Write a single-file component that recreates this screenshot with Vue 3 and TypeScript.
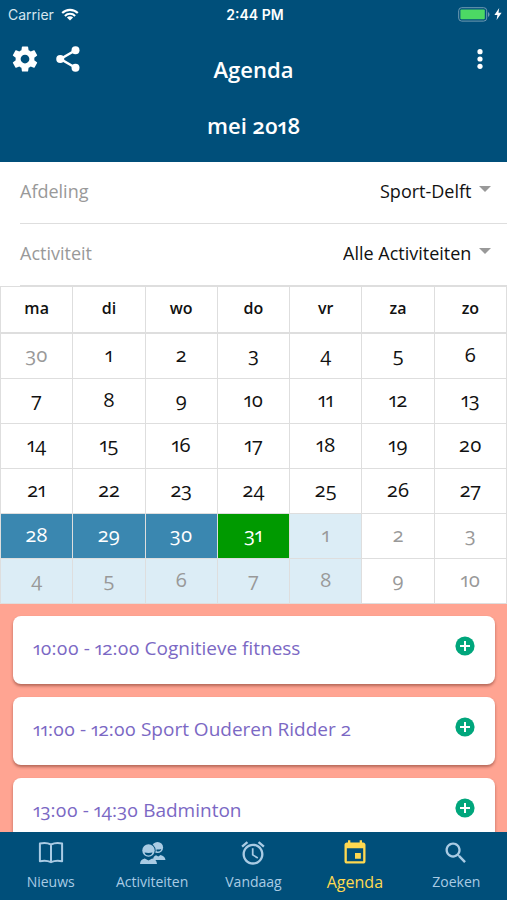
<script setup lang="ts">
import { ref } from 'vue'

type DayState = 'plain' | 'muted' | 'week' | 'today' | 'soon'

interface Day {
  label: number
  state: DayState
}

interface Activity {
  time: string
  name: string
}

interface Tab {
  id: string
  label: string
}

const weekdays: string[] = ['ma', 'di', 'wo', 'do', 'vr', 'za', 'zo']

function buildWeeks(): Day[][] {
  const days: Day[] = [{ label: 30, state: 'muted' }]
  for (let d = 1; d <= 31; d++) {
    const state: DayState = d === 31 ? 'today' : d >= 28 ? 'week' : 'plain'
    days.push({ label: d, state })
  }
  for (let d = 1; d <= 10; d++) {
    const soon = d === 1 || (d >= 4 && d <= 8)
    days.push({ label: d, state: soon ? 'soon' : 'muted' })
  }
  const weeks: Day[][] = []
  for (let i = 0; i < days.length; i += 7) weeks.push(days.slice(i, i + 7))
  return weeks
}

const weeks = buildWeeks()

const department = ref('Sport-Delft')
const activity = ref('Alle Activiteiten')

const activities: Activity[] = [
  { time: '10:00 - 12:00', name: 'Cognitieve fitness' },
  { time: '11:00 - 12:00', name: 'Sport Ouderen Ridder 2' },
  { time: '13:00 - 14:30', name: 'Badminton' },
]

const tabs: Tab[] = [
  { id: 'news', label: 'Nieuws' },
  { id: 'people', label: 'Activiteiten' },
  { id: 'today', label: 'Vandaag' },
  { id: 'agenda', label: 'Agenda' },
  { id: 'search', label: 'Zoeken' },
]
const activeTab = ref('agenda')
</script>

<template>
  <div class="app">
    <header class="header">
      <div class="status">
        <div class="status-left">
          <span>Carrier</span>
          <svg class="wifi" viewBox="0 0 18 13" aria-hidden="true">
            <path d="M1.200 5.100a11 11 0 0 1 15.600 0M3.900 7.900a7.200 7.200 0 0 1 10.200 0" fill="none" stroke="currentColor" stroke-width="2.100" />
            <path d="M9 12.600 5.900 9.500a4.400 4.400 0 0 1 6.200 0z" fill="currentColor" />
          </svg>
        </div>
        <span class="clock">2:44 PM</span>
        <div class="status-right">
          <svg class="battery" viewBox="0 0 32 15" aria-hidden="true">
            <rect x="0.700" y="0.700" width="28" height="13.400" rx="3" fill="none" stroke="#6f9ab3" stroke-width="1" />
            <rect x="2.400" y="2.600" width="24.400" height="9.600" rx="1" fill="#4cd964" />
            <path d="M30 5v5q1.500-.6 1.500-2.500T30 5z" fill="#6f9ab3" />
          </svg>
          <svg class="bolt" viewBox="0 0 8 12" aria-hidden="true">
            <path d="M5.200 0 .4 6.900h3L2.600 12l5-7.200H4.500z" fill="currentColor" />
          </svg>
        </div>
      </div>
      <div class="toolbar">
        <div class="tools">
          <button type="button" class="tool" aria-label="Instellingen">
            <svg class="gear" viewBox="0 0 24 24" aria-hidden="true">
              <path fill="currentColor" d="M19.430 12.980c.040-.32.070-.64.070-.98s-.030-.66-.070-.98l2.110-1.650c.190-.150.240-.420.120-.640l-2-3.460c-.120-.220-.390-.300-.610-.220l-2.490 1c-.520-.400-1.080-.730-1.690-.980l-.380-2.650C14.460 2.180 14.250 2 14 2h-4c-.250 0-.460.180-.490.420l-.380 2.650c-.610.250-1.170.590-1.690.980l-2.490-1c-.230-.090-.490 0-.610.220l-2 3.460c-.130.220-.070.490.120.640l2.110 1.650c-.040.320-.070.650-.070.980s.030.660.070.980l-2.110 1.650c-.190.150-.240.420-.120.640l2 3.460c.120.220.390.300.610.220l2.490-1c.520.400 1.080.730 1.690.980l.380 2.650c.030.240.240.420.490.420h4c.250 0 .460-.180.490-.420l.380-2.650c.610-.250 1.170-.590 1.690-.980l2.490 1c.230.090.490 0 .610-.220l2-3.460c.120-.220.070-.490-.120-.640l-2.110-1.650zM12 15.500c-1.930 0-3.500-1.570-3.500-3.500s1.570-3.500 3.500-3.500 3.500 1.570 3.500 3.500-1.570 3.500-3.500 3.500z" />
            </svg>
          </button>
          <button type="button" class="tool" aria-label="Delen">
            <svg class="share" viewBox="0 0 24 24" aria-hidden="true">
              <path d="M18 5 6 12l12 7" fill="none" stroke="currentColor" stroke-width="2" />
              <g fill="currentColor">
                <circle cx="18" cy="5" r="3.200" />
                <circle cx="5.800" cy="12" r="3.200" />
                <circle cx="18" cy="19" r="3.200" />
              </g>
            </svg>
          </button>
        </div>
        <h1 class="title">Agenda</h1>
        <div class="tools tools-end">
          <button type="button" class="tool" aria-label="Meer">
            <svg class="more" viewBox="0 0 6 20" aria-hidden="true" fill="currentColor">
              <circle cx="3" cy="2.700" r="2.600" />
              <circle cx="3" cy="10" r="2.600" />
              <circle cx="3" cy="17.300" r="2.600" />
            </svg>
          </button>
        </div>
      </div>
      <h2 class="month">mei 2018</h2>
    </header>

    <form class="filters">
      <div class="filter">
        <label for="department">Afdeling</label>
        <select id="department" v-model="department">
          <option>Sport-Delft</option>
        </select>
        <svg class="caret" viewBox="0 0 12 6" aria-hidden="true"><path d="M0 0h12L6 6z" fill="#999" /></svg>
      </div>
      <div class="filter">
        <label for="activity">Activiteit</label>
        <select id="activity" v-model="activity">
          <option>Alle Activiteiten</option>
        </select>
        <svg class="caret" viewBox="0 0 12 6" aria-hidden="true"><path d="M0 0h12L6 6z" fill="#999" /></svg>
      </div>
    </form>

    <table class="calendar">
      <thead>
        <tr>
          <th v-for="name in weekdays" :key="name" scope="col">{{ name }}</th>
        </tr>
      </thead>
      <tbody>
        <tr v-for="(week, w) in weeks" :key="w">
          <td v-for="day in week" :key="day.label" :class="day.state">
            <button type="button" class="day">{{ day.label }}</button>
          </td>
        </tr>
      </tbody>
    </table>

    <main class="agenda">
      <article v-for="item in activities" :key="item.time" class="card">
        <span class="card-text">{{ item.time }} {{ item.name }}</span>
        <button type="button" class="add" :aria-label="`${item.name} toevoegen`">
          <svg viewBox="0 0 20 20" aria-hidden="true">
            <circle cx="10" cy="10" r="9.600" fill="#00a67c" />
            <path d="M10 5v10M5 10h10" stroke="#fff" stroke-width="2" />
          </svg>
        </button>
      </article>
    </main>

    <nav class="tabs">
      <a
        v-for="tab in tabs"
        :key="tab.id"
        href="#"
        class="tab"
        :class="{ active: tab.id === activeTab }"
        @click.prevent="activeTab = tab.id"
      >
        <svg v-if="tab.id === 'news'" viewBox="0 0 28 28" aria-hidden="true">
          <path d="M14 5.500C10.500 3.700 6.500 3.600 2.900 4.500v17.700c3.700-.9 7.600-.8 11.100 1 3.500-1.800 7.400-1.900 11.100-1V4.500C21.500 3.600 17.500 3.700 14 5.500zM14 5.500v17.500" fill="none" stroke="currentColor" stroke-width="2" stroke-linejoin="round" />
        </svg>
        <svg v-else-if="tab.id === 'people'" viewBox="0 0 28 28" aria-hidden="true">
          <g fill="currentColor">
            <circle cx="19.500" cy="8.500" r="5.600" />
            <path d="M15 21c.2-2.500.8-4 3-4.700l2.300 1.200 2.200-1.500c3 .7 4.500 2 5 5z" />
          </g>
          <circle cx="10.500" cy="11.500" r="7.200" fill="#004f7a" />
          <g fill="currentColor">
            <circle cx="10.500" cy="11.500" r="6.200" />
            <path d="M2 25c.3-3.500 1.700-5 4.800-5.600l3.700 2.200 3.700-2.200c3.100.6 4.500 2.100 4.800 5.600z" />
          </g>
          <path d="M6.500 13.500q4 .9 8 0-.8 3-4 3t-4-3zM18.500 10.500q2.500.3 4.800-.6-.6 2.600-3 2.700-1.300 0-1.800-.6z" fill="#004f7a" />
        </svg>
        <svg v-else-if="tab.id === 'today'" viewBox="0 0 24 24" aria-hidden="true">
          <path fill="currentColor" d="M22 5.720l-4.600-3.860-1.290 1.530 4.600 3.860L22 5.720zM7.880 3.390L6.600 1.860 2 5.710l1.290 1.530 4.590-3.850zM12.500 8H11v6l4.750 2.850.75-1.230-4-2.370V8zM12 4c-4.970 0-9 4.030-9 9s4.020 9 9 9c4.970 0 9-4.030 9-9s-4.030-9-9-9zm0 16c-3.870 0-7-3.130-7-7s3.130-7 7-7 7 3.130 7 7-3.130 7-7 7z" />
        </svg>
        <svg v-else-if="tab.id === 'agenda'" viewBox="0 0 24 24" aria-hidden="true">
          <path fill="currentColor" d="M17 12h-5v5h5v-5zM16 1v2H8V1H6v2H5c-1.110 0-1.990.9-1.990 2L3 19c0 1.100.890 2 2 2h14c1.100 0 2-.9 2-2V5c0-1.100-.9-2-2-2h-1V1h-2zm3 18H5V8h14v11z" />
        </svg>
        <svg v-else viewBox="0 0 24 24" aria-hidden="true">
          <path fill="currentColor" d="M15.500 14h-.790l-.280-.270C15.410 12.590 16 11.110 16 9.500 16 5.910 13.090 3 9.500 3S3 5.910 3 9.500 5.910 16 9.500 16c1.610 0 3.090-.590 4.230-1.570l.270.280v.790l5 4.990L20.490 19l-4.990-5zm-6 0C7.010 14 5 11.990 5 9.500S7.010 5 9.500 5 14 7.010 14 9.500 11.990 14 9.500 14z" />
        </svg>
        <span>{{ tab.label }}</span>
      </a>
    </nav>
  </div>
</template>

<style>
body {
  margin: 0;
  background: #ffa492;
}
</style>

<style scoped>
.app {
  display: flex;
  flex-direction: column;
  height: 100vh;
  font-family: "Open Sans", "Noto Sans", sans-serif;
  font-variant-numeric: oldstyle-nums proportional-nums;
  font-size: 18px;
  color: #111;
  background: #fff;
}

.app *,
.app {
  box-sizing: border-box;
}

button {
  padding: 0;
  border: 0;
  background: none;
  color: inherit;
  font: inherit;
  font-variant-numeric: inherit;
  cursor: pointer;
}

svg {
  display: block;
}

.header {
  flex: none;
  padding-bottom: 21px;
  background: #004f7a;
  color: #fff;
}

.status {
  display: grid;
  grid-template-columns: 1fr auto 1fr;
  align-items: center;
  height: 28px;
  padding: 0 5px 0 8px;
  font-family: Inter, sans-serif;
  font-variant-numeric: normal;
  font-size: 14px;
}

.status-left,
.status-right {
  display: flex;
  align-items: center;
  gap: 7px;
}

.status-left {
  color: #d5e6ef;
}

.status-right {
  justify-content: flex-end;
  gap: 4px;
}

.wifi {
  width: 18px;
  height: 13px;
  color: #fff;
}

.clock {
  font-weight: 600;
}

.battery {
  width: 32px;
  height: 15px;
}

.bolt {
  width: 8px;
  height: 12px;
}

.toolbar {
  display: grid;
  grid-template-columns: 1fr auto 1fr;
  align-items: start;
  padding: 16px 10px 0;
}

.tools {
  display: flex;
  gap: 13px;
}

.tools-end {
  justify-content: flex-end;
}

.tool {
  display: flex;
  align-items: center;
  justify-content: center;
  width: 30px;
  height: 30px;
}

.tools-end .tool {
  width: 34px;
}

.gear,
.share {
  width: 30px;
  height: 30px;
}

.more {
  width: 6px;
  height: 20px;
}

.title,
.month {
  margin: 0;
  font-size: 22px;
  line-height: 32px;
  font-weight: 600;
  text-align: center;
}

.title {
  margin-top: 9px;
}

.month {
  margin-top: 24px;
}

.filters {
  flex: none;
  padding-left: 20px;
}

.filter {
  display: flex;
  align-items: center;
  height: 62px;
  padding: 0 16px 4px 0;
  border-bottom: 1px solid #dedede;
}

.filter label {
  flex: 1;
  color: #999;
}

.filter select {
  appearance: none;
  padding: 0;
  border: 0;
  background: none;
  color: inherit;
  font: inherit;
}

.caret {
  flex: none;
  width: 12px;
  height: 6px;
  margin: 0 0 4px 7px;
}

.calendar {
  flex: none;
  width: 100%;
  table-layout: fixed;
  border-collapse: collapse;
}

.calendar th,
.calendar td {
  padding: 0;
  border: 1px solid #dedede;
  text-align: center;
}

.calendar th {
  height: 46px;
  border-bottom-width: 2px;
  padding-bottom: 2px;
  font-size: 16px;
  font-weight: 600;
}

.calendar td {
  height: 45px;
}

.day {
  display: block;
  width: 100%;
  height: 44px;
  padding-bottom: 3px;
  font-size: 20px;
}

.calendar .muted,
.calendar .soon {
  color: #999;
}

.soon {
  background: #dcedf6;
}

.week {
  background: #3a87b0;
  color: #fff;
}

.today {
  background: #009a00;
  color: #fff;
}

.agenda {
  flex: 1;
  min-height: 0;
  overflow: auto;
  scrollbar-width: none;
  display: flex;
  flex-direction: column;
  gap: 13px;
  padding: 12px 12px 12px 13px;
  background: #ffa492;
}

.card {
  flex: none;
  display: flex;
  align-items: center;
  justify-content: space-between;
  height: 68px;
  padding: 0 20px 4px;
  border-radius: 8px;
  background: #fff;
  box-shadow: 0 2px 3px rgba(90, 30, 20, 0.45);
  color: #7b68c4;
  font-size: 19px;
}

.add svg {
  width: 20px;
  height: 20px;
}

.add {
  margin-bottom: 4px;
}

.tabs {
  flex: none;
  display: grid;
  grid-template-columns: repeat(5, 1fr);
  height: 68px;
  background: #004f7a;
}

.tab {
  display: flex;
  flex-direction: column;
  align-items: center;
  gap: 3px;
  padding-top: 7px;
  color: #a9cbe4;
  font-size: 14px;
  line-height: 24px;
  text-decoration: none;
}

.tab svg {
  width: 28px;
  height: 28px;
}

.tab.active {
  color: #ffd950;
  font-size: 16px;
}
</style>
